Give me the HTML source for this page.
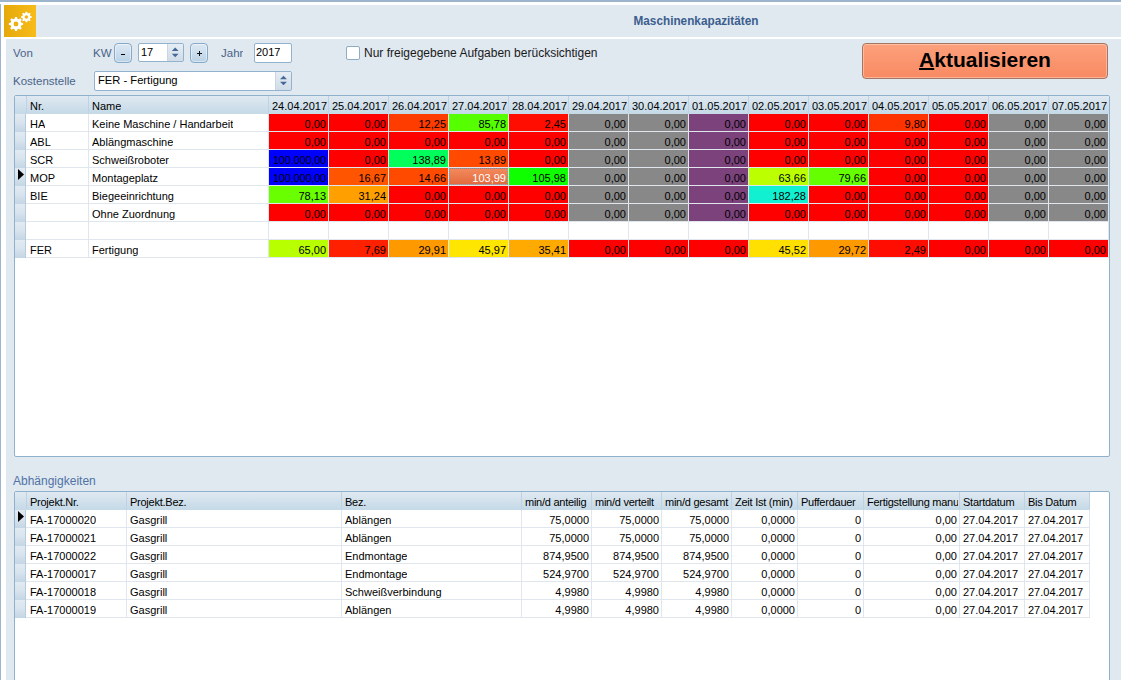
<!DOCTYPE html>
<html><head><meta charset="utf-8"><title>Maschinenkapazitäten</title>
<style>
html,body{margin:0;padding:0;}
body{width:1121px;height:680px;overflow:hidden;position:relative;background:#fff;font-family:"Liberation Sans",sans-serif;font-size:11px;color:#000;}
div,span{position:absolute;box-sizing:border-box;}
.t{white-space:nowrap;line-height:20px;overflow:hidden;}
.r{text-align:right;}
.hd{background:linear-gradient(#e0e9f1,#c4d9e7);}
.ind{background:linear-gradient(#e2eaf2 0%,#d9e4ee 45%,#c4d5e4 100%);}
.lbl{color:#4a6488;font-size:11.5px;white-space:nowrap;}
</style></head><body>

<div style="left:0px;top:0px;width:1121px;height:2px;background:#9cb4cc"></div>
<div style="left:0px;top:4px;width:1px;height:676px;background:#9cb4cc"></div>
<div style="left:4px;top:5px;width:32px;height:32px;background:linear-gradient(90deg,#e5a90b,#f7bb1a)"></div>
<svg style="position:absolute;left:0;top:0" width="40" height="40" viewBox="0 0 40 40"><path fill="#fff" fill-rule="evenodd" d="M21.34,22.67 L23.12,22.95 L23.12,25.05 L21.34,25.33 L20.71,26.84 L21.78,28.30 L20.30,29.78 L18.84,28.71 L17.33,29.34 L17.05,31.12 L14.95,31.12 L14.67,29.34 L13.16,28.71 L11.70,29.78 L10.22,28.30 L11.29,26.84 L10.66,25.33 L8.88,25.05 L8.88,22.95 L10.66,22.67 L11.29,21.16 L10.22,19.70 L11.70,18.22 L13.16,19.29 L14.67,18.66 L14.95,16.88 L17.05,16.88 L17.33,18.66 L18.84,19.29 L20.30,18.22 L21.78,19.70 L20.71,21.16Z M18.40,24.00 A2.4,2.4 0 1,0 13.60,24.00 A2.4,2.4 0 1,0 18.40,24.00Z M30.38,16.01 L31.74,16.21 L31.74,17.79 L30.38,17.99 L29.91,19.11 L30.73,20.22 L29.62,21.33 L28.51,20.51 L27.39,20.98 L27.19,22.34 L25.61,22.34 L25.41,20.98 L24.29,20.51 L23.18,21.33 L22.07,20.22 L22.89,19.11 L22.42,17.99 L21.06,17.79 L21.06,16.21 L22.42,16.01 L22.89,14.89 L22.07,13.78 L23.18,12.67 L24.29,13.49 L25.41,13.02 L25.61,11.66 L27.19,11.66 L27.39,13.02 L28.51,13.49 L29.62,12.67 L30.73,13.78 L29.91,14.89Z M28.20,17.00 A1.8,1.8 0 1,0 24.60,17.00 A1.8,1.8 0 1,0 28.20,17.00Z"/></svg>
<div style="left:36px;top:5px;width:1085px;height:32px;background:#e0e8f0"></div>
<div style="left:36px;top:5px;width:1085px;height:32px;"></div>
<div class="t" style="left:596px;top:11px;width:200px;height:24px;text-align:center;font-weight:bold;font-size:12.6px;transform:scaleX(0.935);color:#3b5e8e;">Maschinenkapazitäten</div>
<div style="left:6px;top:39px;width:1115px;height:641px;background:#e0e8f0"></div>
<div class="lbl t" style="left:13px;top:43px;">Von</div>
<div class="lbl t" style="left:93px;top:43px;">KW</div>
<div class="lbl t" style="left:221px;top:43px;">Jahr</div>
<div class="lbl t" style="left:13px;top:71px;">Kostenstelle</div>
<div style="left:114px;top:43px;width:18px;height:20px;border:1px solid #86a9c9;border-radius:4px;background:linear-gradient(#dde9f3,#bad2e6);box-shadow:inset 0 0 0 1px rgba(255,255,255,0.45);"><div style="left:6px;top:10px;width:4px;height:1px;background:#000"></div></div>
<div style="left:138px;top:43px;width:46px;height:19px;border:1px solid #92b2ce;border-radius:2px;background:#fff;"></div>
<div style="left:167px;top:44px;width:16px;height:17px;background:linear-gradient(#e6edf4,#d0dce8);border-left:1px solid #c8d6e4;"></div>
<svg style="position:absolute;left:167px;top:44px" width="16" height="17"><path d="M4.8,7 L8.2,3.6 L11.6,7Z M4.8,9.8 L8.2,13.2 L11.6,9.8Z" fill="#44689a"/></svg>
<div class="t" style="left:141px;top:42px;font-size:11px;line-height:20px;">17</div>
<div style="left:190px;top:43px;width:18px;height:20px;border:1px solid #86a9c9;border-radius:4px;background:linear-gradient(#dde9f3,#bad2e6);box-shadow:inset 0 0 0 1px rgba(255,255,255,0.45);"><div style="left:6px;top:9px;width:5px;height:1px;background:#111"></div><div style="left:8px;top:7px;width:1px;height:5px;background:#111"></div></div>
<div style="left:254px;top:43px;width:38px;height:20px;border:1px solid #92b2ce;border-radius:2px;background:#fff;"></div>
<div class="t" style="left:256px;top:42px;font-size:11px;">2017</div>
<div style="left:94px;top:71px;width:198px;height:20px;border:1px solid #92b2ce;border-radius:2px;background:#fff;"></div>
<div style="left:275px;top:72px;width:16px;height:18px;background:linear-gradient(#e6edf4,#d0dce8);border-left:1px solid #c8d6e4;"></div>
<svg style="position:absolute;left:275px;top:72px" width="16" height="18"><path d="M5,7.2 L8.5,3.8 L12,7.2Z M5,9.8 L8.5,13.2 L12,9.8Z" fill="#44689a"/></svg>
<div class="t" style="left:98px;top:70px;font-size:11.2px;">FER - Fertigung</div>
<div style="left:346px;top:46px;width:14px;height:14px;border:1px solid #8eacc8;border-radius:2px;background:#fff;"></div>
<div class="t" style="left:364px;top:43px;font-size:12px;color:#1a1a1a;">Nur freigegebene Aufgaben berücksichtigen</div>
<div style="left:862px;top:43px;width:246px;height:36px;border:1px solid #a27565;border-radius:4px;background:linear-gradient(#fca07c,#f88a62);box-shadow:inset 0 0 0 1px rgba(255,215,190,0.55);"></div>
<div class="t" style="left:862px;top:48px;width:246px;height:26px;line-height:24px;text-align:center;font-weight:bold;font-size:21px;"><u style="text-decoration-thickness:1.5px;text-underline-offset:1px">A</u>ktualisieren</div>
<div style="left:14px;top:95px;width:1096px;height:362px;border:1px solid #8fb1cc;background:#fff;border-radius:2px;"></div>
<div style="left:15px;top:96px;width:1094px;height:18px;"></div>
<div class="hd" style="left:15px;top:96px;width:1094px;height:18px;"></div>
<div style="left:26px;top:96px;width:1px;height:17px;background:#bfd2e3"></div>
<div style="left:88px;top:96px;width:1px;height:17px;background:#bfd2e3"></div>
<div style="left:268px;top:96px;width:1px;height:17px;background:#bfd2e3"></div>
<div style="left:328px;top:96px;width:1px;height:17px;background:#bfd2e3"></div>
<div style="left:388px;top:96px;width:1px;height:17px;background:#bfd2e3"></div>
<div style="left:448px;top:96px;width:1px;height:17px;background:#bfd2e3"></div>
<div style="left:508px;top:96px;width:1px;height:17px;background:#bfd2e3"></div>
<div style="left:568px;top:96px;width:1px;height:17px;background:#bfd2e3"></div>
<div style="left:628px;top:96px;width:1px;height:17px;background:#bfd2e3"></div>
<div style="left:688px;top:96px;width:1px;height:17px;background:#bfd2e3"></div>
<div style="left:748px;top:96px;width:1px;height:17px;background:#bfd2e3"></div>
<div style="left:808px;top:96px;width:1px;height:17px;background:#bfd2e3"></div>
<div style="left:868px;top:96px;width:1px;height:17px;background:#bfd2e3"></div>
<div style="left:928px;top:96px;width:1px;height:17px;background:#bfd2e3"></div>
<div style="left:988px;top:96px;width:1px;height:17px;background:#bfd2e3"></div>
<div style="left:1048px;top:96px;width:1px;height:17px;background:#bfd2e3"></div>
<div class="t" style="left:30px;top:96px;">Nr.</div>
<div class="t" style="left:92px;top:96px;">Name</div>
<div class="t" style="left:272px;top:96px;">24.04.2017</div>
<div class="t" style="left:332px;top:96px;">25.04.2017</div>
<div class="t" style="left:392px;top:96px;">26.04.2017</div>
<div class="t" style="left:452px;top:96px;">27.04.2017</div>
<div class="t" style="left:512px;top:96px;">28.04.2017</div>
<div class="t" style="left:572px;top:96px;">29.04.2017</div>
<div class="t" style="left:632px;top:96px;">30.04.2017</div>
<div class="t" style="left:692px;top:96px;">01.05.2017</div>
<div class="t" style="left:752px;top:96px;">02.05.2017</div>
<div class="t" style="left:812px;top:96px;">03.05.2017</div>
<div class="t" style="left:872px;top:96px;">04.05.2017</div>
<div class="t" style="left:932px;top:96px;">05.05.2017</div>
<div class="t" style="left:992px;top:96px;">06.05.2017</div>
<div class="t" style="left:1052px;top:96px;">07.05.2017</div>
<div class="ind" style="left:15px;top:114px;width:10px;height:18px;"></div>
<div style="left:25px;top:114px;width:1px;height:18px;background:#b4cce0"></div>
<div style="left:26px;top:131px;width:1083px;height:1px;background:#dfe6ee"></div>
<div style="left:88px;top:114px;width:1px;height:17px;background:#dfe6ee"></div>
<div style="left:268px;top:114px;width:1px;height:17px;background:#dfe6ee"></div>
<div style="left:328px;top:114px;width:1px;height:17px;background:#dfe6ee"></div>
<div style="left:388px;top:114px;width:1px;height:17px;background:#dfe6ee"></div>
<div style="left:448px;top:114px;width:1px;height:17px;background:#dfe6ee"></div>
<div style="left:508px;top:114px;width:1px;height:17px;background:#dfe6ee"></div>
<div style="left:568px;top:114px;width:1px;height:17px;background:#dfe6ee"></div>
<div style="left:628px;top:114px;width:1px;height:17px;background:#dfe6ee"></div>
<div style="left:688px;top:114px;width:1px;height:17px;background:#dfe6ee"></div>
<div style="left:748px;top:114px;width:1px;height:17px;background:#dfe6ee"></div>
<div style="left:808px;top:114px;width:1px;height:17px;background:#dfe6ee"></div>
<div style="left:868px;top:114px;width:1px;height:17px;background:#dfe6ee"></div>
<div style="left:928px;top:114px;width:1px;height:17px;background:#dfe6ee"></div>
<div style="left:988px;top:114px;width:1px;height:17px;background:#dfe6ee"></div>
<div style="left:1048px;top:114px;width:1px;height:17px;background:#dfe6ee"></div>
<div style="left:1108px;top:114px;width:1px;height:17px;background:#dfe6ee"></div>
<div class="t" style="left:30px;top:114px;">HA</div>
<div class="t" style="left:92px;top:114px;">Keine Maschine / Handarbeit</div>
<div class="t r" style="left:269px;top:114px;width:59px;height:17px;background:#ff0000;line-height:20px;padding-right:2px;">0,00</div>
<div class="t r" style="left:329px;top:114px;width:59px;height:17px;background:#ff0000;line-height:20px;padding-right:2px;">0,00</div>
<div class="t r" style="left:389px;top:114px;width:59px;height:17px;background:#ff3c00;line-height:20px;padding-right:2px;">12,25</div>
<div class="t r" style="left:449px;top:114px;width:59px;height:17px;background:#55ff00;line-height:20px;padding-right:2px;">85,78</div>
<div class="t r" style="left:509px;top:114px;width:59px;height:17px;background:#ff0d00;line-height:20px;padding-right:2px;">2,45</div>
<div class="t r" style="left:569px;top:114px;width:59px;height:17px;background:#888888;line-height:20px;padding-right:2px;">0,00</div>
<div class="t r" style="left:629px;top:114px;width:59px;height:17px;background:#888888;line-height:20px;padding-right:2px;">0,00</div>
<div class="t r" style="left:689px;top:114px;width:59px;height:17px;background:#7b427c;line-height:20px;padding-right:2px;">0,00</div>
<div class="t r" style="left:749px;top:114px;width:59px;height:17px;background:#ff0000;line-height:20px;padding-right:2px;">0,00</div>
<div class="t r" style="left:809px;top:114px;width:59px;height:17px;background:#ff0000;line-height:20px;padding-right:2px;">0,00</div>
<div class="t r" style="left:869px;top:114px;width:59px;height:17px;background:#ff3300;line-height:20px;padding-right:2px;">9,80</div>
<div class="t r" style="left:929px;top:114px;width:59px;height:17px;background:#ff0000;line-height:20px;padding-right:2px;">0,00</div>
<div class="t r" style="left:989px;top:114px;width:59px;height:17px;background:#888888;line-height:20px;padding-right:2px;">0,00</div>
<div class="t r" style="left:1049px;top:114px;width:59px;height:17px;background:#888888;line-height:20px;padding-right:2px;">0,00</div>
<div class="ind" style="left:15px;top:132px;width:10px;height:18px;"></div>
<div style="left:25px;top:132px;width:1px;height:18px;background:#b4cce0"></div>
<div style="left:26px;top:149px;width:1083px;height:1px;background:#dfe6ee"></div>
<div style="left:88px;top:132px;width:1px;height:17px;background:#dfe6ee"></div>
<div style="left:268px;top:132px;width:1px;height:17px;background:#dfe6ee"></div>
<div style="left:328px;top:132px;width:1px;height:17px;background:#dfe6ee"></div>
<div style="left:388px;top:132px;width:1px;height:17px;background:#dfe6ee"></div>
<div style="left:448px;top:132px;width:1px;height:17px;background:#dfe6ee"></div>
<div style="left:508px;top:132px;width:1px;height:17px;background:#dfe6ee"></div>
<div style="left:568px;top:132px;width:1px;height:17px;background:#dfe6ee"></div>
<div style="left:628px;top:132px;width:1px;height:17px;background:#dfe6ee"></div>
<div style="left:688px;top:132px;width:1px;height:17px;background:#dfe6ee"></div>
<div style="left:748px;top:132px;width:1px;height:17px;background:#dfe6ee"></div>
<div style="left:808px;top:132px;width:1px;height:17px;background:#dfe6ee"></div>
<div style="left:868px;top:132px;width:1px;height:17px;background:#dfe6ee"></div>
<div style="left:928px;top:132px;width:1px;height:17px;background:#dfe6ee"></div>
<div style="left:988px;top:132px;width:1px;height:17px;background:#dfe6ee"></div>
<div style="left:1048px;top:132px;width:1px;height:17px;background:#dfe6ee"></div>
<div style="left:1108px;top:132px;width:1px;height:17px;background:#dfe6ee"></div>
<div class="t" style="left:30px;top:132px;">ABL</div>
<div class="t" style="left:92px;top:132px;">Ablängmaschine</div>
<div class="t r" style="left:269px;top:132px;width:59px;height:17px;background:#ff0000;line-height:20px;padding-right:2px;">0,00</div>
<div class="t r" style="left:329px;top:132px;width:59px;height:17px;background:#ff0000;line-height:20px;padding-right:2px;">0,00</div>
<div class="t r" style="left:389px;top:132px;width:59px;height:17px;background:#ff0000;line-height:20px;padding-right:2px;">0,00</div>
<div class="t r" style="left:449px;top:132px;width:59px;height:17px;background:#ff0000;line-height:20px;padding-right:2px;">0,00</div>
<div class="t r" style="left:509px;top:132px;width:59px;height:17px;background:#ff0000;line-height:20px;padding-right:2px;">0,00</div>
<div class="t r" style="left:569px;top:132px;width:59px;height:17px;background:#888888;line-height:20px;padding-right:2px;">0,00</div>
<div class="t r" style="left:629px;top:132px;width:59px;height:17px;background:#888888;line-height:20px;padding-right:2px;">0,00</div>
<div class="t r" style="left:689px;top:132px;width:59px;height:17px;background:#7b427c;line-height:20px;padding-right:2px;">0,00</div>
<div class="t r" style="left:749px;top:132px;width:59px;height:17px;background:#ff0000;line-height:20px;padding-right:2px;">0,00</div>
<div class="t r" style="left:809px;top:132px;width:59px;height:17px;background:#ff0000;line-height:20px;padding-right:2px;">0,00</div>
<div class="t r" style="left:869px;top:132px;width:59px;height:17px;background:#ff0000;line-height:20px;padding-right:2px;">0,00</div>
<div class="t r" style="left:929px;top:132px;width:59px;height:17px;background:#ff0000;line-height:20px;padding-right:2px;">0,00</div>
<div class="t r" style="left:989px;top:132px;width:59px;height:17px;background:#888888;line-height:20px;padding-right:2px;">0,00</div>
<div class="t r" style="left:1049px;top:132px;width:59px;height:17px;background:#888888;line-height:20px;padding-right:2px;">0,00</div>
<div class="ind" style="left:15px;top:150px;width:10px;height:18px;"></div>
<div style="left:25px;top:150px;width:1px;height:18px;background:#b4cce0"></div>
<div style="left:26px;top:167px;width:1083px;height:1px;background:#dfe6ee"></div>
<div style="left:88px;top:150px;width:1px;height:17px;background:#dfe6ee"></div>
<div style="left:268px;top:150px;width:1px;height:17px;background:#dfe6ee"></div>
<div style="left:328px;top:150px;width:1px;height:17px;background:#dfe6ee"></div>
<div style="left:388px;top:150px;width:1px;height:17px;background:#dfe6ee"></div>
<div style="left:448px;top:150px;width:1px;height:17px;background:#dfe6ee"></div>
<div style="left:508px;top:150px;width:1px;height:17px;background:#dfe6ee"></div>
<div style="left:568px;top:150px;width:1px;height:17px;background:#dfe6ee"></div>
<div style="left:628px;top:150px;width:1px;height:17px;background:#dfe6ee"></div>
<div style="left:688px;top:150px;width:1px;height:17px;background:#dfe6ee"></div>
<div style="left:748px;top:150px;width:1px;height:17px;background:#dfe6ee"></div>
<div style="left:808px;top:150px;width:1px;height:17px;background:#dfe6ee"></div>
<div style="left:868px;top:150px;width:1px;height:17px;background:#dfe6ee"></div>
<div style="left:928px;top:150px;width:1px;height:17px;background:#dfe6ee"></div>
<div style="left:988px;top:150px;width:1px;height:17px;background:#dfe6ee"></div>
<div style="left:1048px;top:150px;width:1px;height:17px;background:#dfe6ee"></div>
<div style="left:1108px;top:150px;width:1px;height:17px;background:#dfe6ee"></div>
<div class="t" style="left:30px;top:150px;">SCR</div>
<div class="t" style="left:92px;top:150px;">Schweißroboter</div>
<div class="t r" style="left:269px;top:150px;width:59px;height:17px;background:#0000ff;line-height:20px;padding-right:2px;letter-spacing:-0.2px;">100.000,00</div>
<div class="t r" style="left:329px;top:150px;width:59px;height:17px;background:#ff0000;line-height:20px;padding-right:2px;">0,00</div>
<div class="t r" style="left:389px;top:150px;width:59px;height:17px;background:#00ff5a;line-height:20px;padding-right:2px;">138,89</div>
<div class="t r" style="left:449px;top:150px;width:59px;height:17px;background:#ff4a00;line-height:20px;padding-right:2px;">13,89</div>
<div class="t r" style="left:509px;top:150px;width:59px;height:17px;background:#ff0000;line-height:20px;padding-right:2px;">0,00</div>
<div class="t r" style="left:569px;top:150px;width:59px;height:17px;background:#888888;line-height:20px;padding-right:2px;">0,00</div>
<div class="t r" style="left:629px;top:150px;width:59px;height:17px;background:#888888;line-height:20px;padding-right:2px;">0,00</div>
<div class="t r" style="left:689px;top:150px;width:59px;height:17px;background:#7b427c;line-height:20px;padding-right:2px;">0,00</div>
<div class="t r" style="left:749px;top:150px;width:59px;height:17px;background:#ff0000;line-height:20px;padding-right:2px;">0,00</div>
<div class="t r" style="left:809px;top:150px;width:59px;height:17px;background:#ff0000;line-height:20px;padding-right:2px;">0,00</div>
<div class="t r" style="left:869px;top:150px;width:59px;height:17px;background:#ff0000;line-height:20px;padding-right:2px;">0,00</div>
<div class="t r" style="left:929px;top:150px;width:59px;height:17px;background:#ff0000;line-height:20px;padding-right:2px;">0,00</div>
<div class="t r" style="left:989px;top:150px;width:59px;height:17px;background:#888888;line-height:20px;padding-right:2px;">0,00</div>
<div class="t r" style="left:1049px;top:150px;width:59px;height:17px;background:#888888;line-height:20px;padding-right:2px;">0,00</div>
<div class="ind" style="left:15px;top:168px;width:10px;height:18px;"></div>
<div style="left:25px;top:168px;width:1px;height:18px;background:#b4cce0"></div>
<div style="left:26px;top:185px;width:1083px;height:1px;background:#dfe6ee"></div>
<div style="left:88px;top:168px;width:1px;height:17px;background:#dfe6ee"></div>
<div style="left:268px;top:168px;width:1px;height:17px;background:#dfe6ee"></div>
<div style="left:328px;top:168px;width:1px;height:17px;background:#dfe6ee"></div>
<div style="left:388px;top:168px;width:1px;height:17px;background:#dfe6ee"></div>
<div style="left:448px;top:168px;width:1px;height:17px;background:#dfe6ee"></div>
<div style="left:508px;top:168px;width:1px;height:17px;background:#dfe6ee"></div>
<div style="left:568px;top:168px;width:1px;height:17px;background:#dfe6ee"></div>
<div style="left:628px;top:168px;width:1px;height:17px;background:#dfe6ee"></div>
<div style="left:688px;top:168px;width:1px;height:17px;background:#dfe6ee"></div>
<div style="left:748px;top:168px;width:1px;height:17px;background:#dfe6ee"></div>
<div style="left:808px;top:168px;width:1px;height:17px;background:#dfe6ee"></div>
<div style="left:868px;top:168px;width:1px;height:17px;background:#dfe6ee"></div>
<div style="left:928px;top:168px;width:1px;height:17px;background:#dfe6ee"></div>
<div style="left:988px;top:168px;width:1px;height:17px;background:#dfe6ee"></div>
<div style="left:1048px;top:168px;width:1px;height:17px;background:#dfe6ee"></div>
<div style="left:1108px;top:168px;width:1px;height:17px;background:#dfe6ee"></div>
<div class="t" style="left:30px;top:168px;">MOP</div>
<div class="t" style="left:92px;top:168px;">Montageplatz</div>
<div class="t r" style="left:269px;top:168px;width:59px;height:17px;background:#0000ff;line-height:20px;padding-right:2px;letter-spacing:-0.2px;">100.000,00</div>
<div class="t r" style="left:329px;top:168px;width:59px;height:17px;background:#ff5500;line-height:20px;padding-right:2px;">16,67</div>
<div class="t r" style="left:389px;top:168px;width:59px;height:17px;background:#ff4a00;line-height:20px;padding-right:2px;">14,66</div>
<div style="left:449px;top:168px;width:59px;height:17px;border:1px dotted #5fa8d8;background:linear-gradient(#f3895c,#e26b3e);"></div>
<div class="t r" style="left:449px;top:168px;width:57px;height:18px;color:#fff;">103,99</div>
<div class="t r" style="left:509px;top:168px;width:59px;height:17px;background:#10ff00;line-height:20px;padding-right:2px;">105,98</div>
<div class="t r" style="left:569px;top:168px;width:59px;height:17px;background:#888888;line-height:20px;padding-right:2px;">0,00</div>
<div class="t r" style="left:629px;top:168px;width:59px;height:17px;background:#888888;line-height:20px;padding-right:2px;">0,00</div>
<div class="t r" style="left:689px;top:168px;width:59px;height:17px;background:#7b427c;line-height:20px;padding-right:2px;">0,00</div>
<div class="t r" style="left:749px;top:168px;width:59px;height:17px;background:#bbff00;line-height:20px;padding-right:2px;">63,66</div>
<div class="t r" style="left:809px;top:168px;width:59px;height:17px;background:#66ff00;line-height:20px;padding-right:2px;">79,66</div>
<div class="t r" style="left:869px;top:168px;width:59px;height:17px;background:#ff0000;line-height:20px;padding-right:2px;">0,00</div>
<div class="t r" style="left:929px;top:168px;width:59px;height:17px;background:#ff0000;line-height:20px;padding-right:2px;">0,00</div>
<div class="t r" style="left:989px;top:168px;width:59px;height:17px;background:#888888;line-height:20px;padding-right:2px;">0,00</div>
<div class="t r" style="left:1049px;top:168px;width:59px;height:17px;background:#888888;line-height:20px;padding-right:2px;">0,00</div>
<svg style="position:absolute;left:17px;top:168px" width="8" height="13"><path d="M1,1 L7,6.5 L1,12Z" fill="#000"/></svg>
<div class="ind" style="left:15px;top:186px;width:10px;height:18px;"></div>
<div style="left:25px;top:186px;width:1px;height:18px;background:#b4cce0"></div>
<div style="left:26px;top:203px;width:1083px;height:1px;background:#dfe6ee"></div>
<div style="left:88px;top:186px;width:1px;height:17px;background:#dfe6ee"></div>
<div style="left:268px;top:186px;width:1px;height:17px;background:#dfe6ee"></div>
<div style="left:328px;top:186px;width:1px;height:17px;background:#dfe6ee"></div>
<div style="left:388px;top:186px;width:1px;height:17px;background:#dfe6ee"></div>
<div style="left:448px;top:186px;width:1px;height:17px;background:#dfe6ee"></div>
<div style="left:508px;top:186px;width:1px;height:17px;background:#dfe6ee"></div>
<div style="left:568px;top:186px;width:1px;height:17px;background:#dfe6ee"></div>
<div style="left:628px;top:186px;width:1px;height:17px;background:#dfe6ee"></div>
<div style="left:688px;top:186px;width:1px;height:17px;background:#dfe6ee"></div>
<div style="left:748px;top:186px;width:1px;height:17px;background:#dfe6ee"></div>
<div style="left:808px;top:186px;width:1px;height:17px;background:#dfe6ee"></div>
<div style="left:868px;top:186px;width:1px;height:17px;background:#dfe6ee"></div>
<div style="left:928px;top:186px;width:1px;height:17px;background:#dfe6ee"></div>
<div style="left:988px;top:186px;width:1px;height:17px;background:#dfe6ee"></div>
<div style="left:1048px;top:186px;width:1px;height:17px;background:#dfe6ee"></div>
<div style="left:1108px;top:186px;width:1px;height:17px;background:#dfe6ee"></div>
<div class="t" style="left:30px;top:186px;">BIE</div>
<div class="t" style="left:92px;top:186px;">Biegeeinrichtung</div>
<div class="t r" style="left:269px;top:186px;width:59px;height:17px;background:#6aff00;line-height:20px;padding-right:2px;">78,13</div>
<div class="t r" style="left:329px;top:186px;width:59px;height:17px;background:#ff9f00;line-height:20px;padding-right:2px;">31,24</div>
<div class="t r" style="left:389px;top:186px;width:59px;height:17px;background:#ff0000;line-height:20px;padding-right:2px;">0,00</div>
<div class="t r" style="left:449px;top:186px;width:59px;height:17px;background:#ff0000;line-height:20px;padding-right:2px;">0,00</div>
<div class="t r" style="left:509px;top:186px;width:59px;height:17px;background:#ff0000;line-height:20px;padding-right:2px;">0,00</div>
<div class="t r" style="left:569px;top:186px;width:59px;height:17px;background:#888888;line-height:20px;padding-right:2px;">0,00</div>
<div class="t r" style="left:629px;top:186px;width:59px;height:17px;background:#888888;line-height:20px;padding-right:2px;">0,00</div>
<div class="t r" style="left:689px;top:186px;width:59px;height:17px;background:#7b427c;line-height:20px;padding-right:2px;">0,00</div>
<div class="t r" style="left:749px;top:186px;width:59px;height:17px;background:#11f0d0;line-height:20px;padding-right:2px;">182,28</div>
<div class="t r" style="left:809px;top:186px;width:59px;height:17px;background:#ff0000;line-height:20px;padding-right:2px;">0,00</div>
<div class="t r" style="left:869px;top:186px;width:59px;height:17px;background:#ff0000;line-height:20px;padding-right:2px;">0,00</div>
<div class="t r" style="left:929px;top:186px;width:59px;height:17px;background:#ff0000;line-height:20px;padding-right:2px;">0,00</div>
<div class="t r" style="left:989px;top:186px;width:59px;height:17px;background:#888888;line-height:20px;padding-right:2px;">0,00</div>
<div class="t r" style="left:1049px;top:186px;width:59px;height:17px;background:#888888;line-height:20px;padding-right:2px;">0,00</div>
<div class="ind" style="left:15px;top:204px;width:10px;height:18px;"></div>
<div style="left:25px;top:204px;width:1px;height:18px;background:#b4cce0"></div>
<div style="left:26px;top:221px;width:1083px;height:1px;background:#dfe6ee"></div>
<div style="left:88px;top:204px;width:1px;height:17px;background:#dfe6ee"></div>
<div style="left:268px;top:204px;width:1px;height:17px;background:#dfe6ee"></div>
<div style="left:328px;top:204px;width:1px;height:17px;background:#dfe6ee"></div>
<div style="left:388px;top:204px;width:1px;height:17px;background:#dfe6ee"></div>
<div style="left:448px;top:204px;width:1px;height:17px;background:#dfe6ee"></div>
<div style="left:508px;top:204px;width:1px;height:17px;background:#dfe6ee"></div>
<div style="left:568px;top:204px;width:1px;height:17px;background:#dfe6ee"></div>
<div style="left:628px;top:204px;width:1px;height:17px;background:#dfe6ee"></div>
<div style="left:688px;top:204px;width:1px;height:17px;background:#dfe6ee"></div>
<div style="left:748px;top:204px;width:1px;height:17px;background:#dfe6ee"></div>
<div style="left:808px;top:204px;width:1px;height:17px;background:#dfe6ee"></div>
<div style="left:868px;top:204px;width:1px;height:17px;background:#dfe6ee"></div>
<div style="left:928px;top:204px;width:1px;height:17px;background:#dfe6ee"></div>
<div style="left:988px;top:204px;width:1px;height:17px;background:#dfe6ee"></div>
<div style="left:1048px;top:204px;width:1px;height:17px;background:#dfe6ee"></div>
<div style="left:1108px;top:204px;width:1px;height:17px;background:#dfe6ee"></div>
<div class="t" style="left:30px;top:204px;"></div>
<div class="t" style="left:92px;top:204px;">Ohne Zuordnung</div>
<div class="t r" style="left:269px;top:204px;width:59px;height:17px;background:#ff0000;line-height:20px;padding-right:2px;">0,00</div>
<div class="t r" style="left:329px;top:204px;width:59px;height:17px;background:#ff0000;line-height:20px;padding-right:2px;">0,00</div>
<div class="t r" style="left:389px;top:204px;width:59px;height:17px;background:#ff0000;line-height:20px;padding-right:2px;">0,00</div>
<div class="t r" style="left:449px;top:204px;width:59px;height:17px;background:#ff0000;line-height:20px;padding-right:2px;">0,00</div>
<div class="t r" style="left:509px;top:204px;width:59px;height:17px;background:#ff0000;line-height:20px;padding-right:2px;">0,00</div>
<div class="t r" style="left:569px;top:204px;width:59px;height:17px;background:#888888;line-height:20px;padding-right:2px;">0,00</div>
<div class="t r" style="left:629px;top:204px;width:59px;height:17px;background:#888888;line-height:20px;padding-right:2px;">0,00</div>
<div class="t r" style="left:689px;top:204px;width:59px;height:17px;background:#7b427c;line-height:20px;padding-right:2px;">0,00</div>
<div class="t r" style="left:749px;top:204px;width:59px;height:17px;background:#ff0000;line-height:20px;padding-right:2px;">0,00</div>
<div class="t r" style="left:809px;top:204px;width:59px;height:17px;background:#ff0000;line-height:20px;padding-right:2px;">0,00</div>
<div class="t r" style="left:869px;top:204px;width:59px;height:17px;background:#ff0000;line-height:20px;padding-right:2px;">0,00</div>
<div class="t r" style="left:929px;top:204px;width:59px;height:17px;background:#ff0000;line-height:20px;padding-right:2px;">0,00</div>
<div class="t r" style="left:989px;top:204px;width:59px;height:17px;background:#888888;line-height:20px;padding-right:2px;">0,00</div>
<div class="t r" style="left:1049px;top:204px;width:59px;height:17px;background:#888888;line-height:20px;padding-right:2px;">0,00</div>
<div class="ind" style="left:15px;top:222px;width:10px;height:18px;"></div>
<div style="left:25px;top:222px;width:1px;height:18px;background:#b4cce0"></div>
<div style="left:26px;top:239px;width:1083px;height:1px;background:#dfe6ee"></div>
<div style="left:88px;top:222px;width:1px;height:17px;background:#dfe6ee"></div>
<div style="left:268px;top:222px;width:1px;height:17px;background:#dfe6ee"></div>
<div style="left:328px;top:222px;width:1px;height:17px;background:#dfe6ee"></div>
<div style="left:388px;top:222px;width:1px;height:17px;background:#dfe6ee"></div>
<div style="left:448px;top:222px;width:1px;height:17px;background:#dfe6ee"></div>
<div style="left:508px;top:222px;width:1px;height:17px;background:#dfe6ee"></div>
<div style="left:568px;top:222px;width:1px;height:17px;background:#dfe6ee"></div>
<div style="left:628px;top:222px;width:1px;height:17px;background:#dfe6ee"></div>
<div style="left:688px;top:222px;width:1px;height:17px;background:#dfe6ee"></div>
<div style="left:748px;top:222px;width:1px;height:17px;background:#dfe6ee"></div>
<div style="left:808px;top:222px;width:1px;height:17px;background:#dfe6ee"></div>
<div style="left:868px;top:222px;width:1px;height:17px;background:#dfe6ee"></div>
<div style="left:928px;top:222px;width:1px;height:17px;background:#dfe6ee"></div>
<div style="left:988px;top:222px;width:1px;height:17px;background:#dfe6ee"></div>
<div style="left:1048px;top:222px;width:1px;height:17px;background:#dfe6ee"></div>
<div style="left:1108px;top:222px;width:1px;height:17px;background:#dfe6ee"></div>
<div class="ind" style="left:15px;top:240px;width:10px;height:18px;"></div>
<div style="left:25px;top:240px;width:1px;height:18px;background:#b4cce0"></div>
<div style="left:26px;top:257px;width:1083px;height:1px;background:#dfe6ee"></div>
<div style="left:88px;top:240px;width:1px;height:17px;background:#dfe6ee"></div>
<div style="left:268px;top:240px;width:1px;height:17px;background:#dfe6ee"></div>
<div style="left:328px;top:240px;width:1px;height:17px;background:#dfe6ee"></div>
<div style="left:388px;top:240px;width:1px;height:17px;background:#dfe6ee"></div>
<div style="left:448px;top:240px;width:1px;height:17px;background:#dfe6ee"></div>
<div style="left:508px;top:240px;width:1px;height:17px;background:#dfe6ee"></div>
<div style="left:568px;top:240px;width:1px;height:17px;background:#dfe6ee"></div>
<div style="left:628px;top:240px;width:1px;height:17px;background:#dfe6ee"></div>
<div style="left:688px;top:240px;width:1px;height:17px;background:#dfe6ee"></div>
<div style="left:748px;top:240px;width:1px;height:17px;background:#dfe6ee"></div>
<div style="left:808px;top:240px;width:1px;height:17px;background:#dfe6ee"></div>
<div style="left:868px;top:240px;width:1px;height:17px;background:#dfe6ee"></div>
<div style="left:928px;top:240px;width:1px;height:17px;background:#dfe6ee"></div>
<div style="left:988px;top:240px;width:1px;height:17px;background:#dfe6ee"></div>
<div style="left:1048px;top:240px;width:1px;height:17px;background:#dfe6ee"></div>
<div style="left:1108px;top:240px;width:1px;height:17px;background:#dfe6ee"></div>
<div class="t" style="left:30px;top:240px;">FER</div>
<div class="t" style="left:92px;top:240px;">Fertigung</div>
<div class="t r" style="left:269px;top:240px;width:59px;height:17px;background:#b8ff00;line-height:20px;padding-right:2px;">65,00</div>
<div class="t r" style="left:329px;top:240px;width:59px;height:17px;background:#ff2000;line-height:20px;padding-right:2px;">7,69</div>
<div class="t r" style="left:389px;top:240px;width:59px;height:17px;background:#ff9900;line-height:20px;padding-right:2px;">29,91</div>
<div class="t r" style="left:449px;top:240px;width:59px;height:17px;background:#ffe600;line-height:20px;padding-right:2px;">45,97</div>
<div class="t r" style="left:509px;top:240px;width:59px;height:17px;background:#ffaa00;line-height:20px;padding-right:2px;">35,41</div>
<div class="t r" style="left:569px;top:240px;width:59px;height:17px;background:#ff0000;line-height:20px;padding-right:2px;">0,00</div>
<div class="t r" style="left:629px;top:240px;width:59px;height:17px;background:#ff0000;line-height:20px;padding-right:2px;">0,00</div>
<div class="t r" style="left:689px;top:240px;width:59px;height:17px;background:#ff0000;line-height:20px;padding-right:2px;">0,00</div>
<div class="t r" style="left:749px;top:240px;width:59px;height:17px;background:#ffe000;line-height:20px;padding-right:2px;">45,52</div>
<div class="t r" style="left:809px;top:240px;width:59px;height:17px;background:#ff9900;line-height:20px;padding-right:2px;">29,72</div>
<div class="t r" style="left:869px;top:240px;width:59px;height:17px;background:#ff0d00;line-height:20px;padding-right:2px;">2,49</div>
<div class="t r" style="left:929px;top:240px;width:59px;height:17px;background:#ff0000;line-height:20px;padding-right:2px;">0,00</div>
<div class="t r" style="left:989px;top:240px;width:59px;height:17px;background:#ff0000;line-height:20px;padding-right:2px;">0,00</div>
<div class="t r" style="left:1049px;top:240px;width:59px;height:17px;background:#ff0000;line-height:20px;padding-right:2px;">0,00</div>
<div class="t" style="left:13px;top:471px;color:#4f72a6;font-size:12px;">Abhängigkeiten</div>
<div style="left:14px;top:491px;width:1096px;height:200px;border:1px solid #8fb1cc;background:#fff;border-radius:2px;"></div>
<div class="hd" style="left:15px;top:492px;width:1075px;height:18px;"></div>
<div style="left:26px;top:492px;width:1px;height:17px;background:#bfd2e3"></div>
<div style="left:126px;top:492px;width:1px;height:17px;background:#bfd2e3"></div>
<div style="left:341px;top:492px;width:1px;height:17px;background:#bfd2e3"></div>
<div style="left:521px;top:492px;width:1px;height:17px;background:#bfd2e3"></div>
<div style="left:591px;top:492px;width:1px;height:17px;background:#bfd2e3"></div>
<div style="left:661px;top:492px;width:1px;height:17px;background:#bfd2e3"></div>
<div style="left:731px;top:492px;width:1px;height:17px;background:#bfd2e3"></div>
<div style="left:797px;top:492px;width:1px;height:17px;background:#bfd2e3"></div>
<div style="left:863px;top:492px;width:1px;height:17px;background:#bfd2e3"></div>
<div style="left:959px;top:492px;width:1px;height:17px;background:#bfd2e3"></div>
<div style="left:1024px;top:492px;width:1px;height:17px;background:#bfd2e3"></div>
<div style="left:1089px;top:492px;width:1px;height:17px;background:#bfd2e3"></div>
<div class="t" style="left:30px;top:492px;width:95px;letter-spacing:-0.25px;">Projekt.Nr.</div>
<div class="t" style="left:130px;top:492px;width:210px;letter-spacing:-0.25px;">Projekt.Bez.</div>
<div class="t" style="left:345px;top:492px;width:175px;letter-spacing:-0.25px;">Bez.</div>
<div class="t" style="left:525px;top:492px;width:65px;letter-spacing:-0.25px;">min/d anteilig</div>
<div class="t" style="left:595px;top:492px;width:65px;letter-spacing:-0.25px;">min/d verteilt</div>
<div class="t" style="left:665px;top:492px;width:65px;letter-spacing:-0.25px;">min/d gesamt</div>
<div class="t" style="left:735px;top:492px;width:61px;letter-spacing:-0.25px;">Zeit Ist (min)</div>
<div class="t" style="left:801px;top:492px;width:61px;letter-spacing:-0.25px;">Pufferdauer</div>
<div class="t" style="left:867px;top:492px;width:91px;letter-spacing:-0.25px;">Fertigstellung manuell</div>
<div class="t" style="left:963px;top:492px;width:60px;letter-spacing:-0.25px;">Startdatum</div>
<div class="t" style="left:1028px;top:492px;width:60px;letter-spacing:-0.25px;">Bis Datum</div>
<div class="ind" style="left:15px;top:510px;width:10px;height:18px;"></div>
<div style="left:26px;top:527px;width:1064px;height:1px;background:#dfe6ee"></div>
<div style="left:25px;top:510px;width:1px;height:18px;background:#b4cce0"></div>
<div style="left:126px;top:510px;width:1px;height:17px;background:#dfe6ee"></div>
<div style="left:341px;top:510px;width:1px;height:17px;background:#dfe6ee"></div>
<div style="left:521px;top:510px;width:1px;height:17px;background:#dfe6ee"></div>
<div style="left:591px;top:510px;width:1px;height:17px;background:#dfe6ee"></div>
<div style="left:661px;top:510px;width:1px;height:17px;background:#dfe6ee"></div>
<div style="left:731px;top:510px;width:1px;height:17px;background:#dfe6ee"></div>
<div style="left:797px;top:510px;width:1px;height:17px;background:#dfe6ee"></div>
<div style="left:863px;top:510px;width:1px;height:17px;background:#dfe6ee"></div>
<div style="left:959px;top:510px;width:1px;height:17px;background:#dfe6ee"></div>
<div style="left:1024px;top:510px;width:1px;height:17px;background:#dfe6ee"></div>
<div style="left:1089px;top:510px;width:1px;height:17px;background:#dfe6ee"></div>
<div class="t" style="left:30px;top:510px;">FA-17000020</div>
<div class="t" style="left:130px;top:510px;">Gasgrill</div>
<div class="t" style="left:345px;top:510px;">Ablängen</div>
<div class="t r" style="left:522px;top:510px;width:67px;">75,0000</div>
<div class="t r" style="left:592px;top:510px;width:67px;">75,0000</div>
<div class="t r" style="left:662px;top:510px;width:67px;">75,0000</div>
<div class="t r" style="left:732px;top:510px;width:63px;">0,0000</div>
<div class="t r" style="left:798px;top:510px;width:63px;">0</div>
<div class="t r" style="left:864px;top:510px;width:93px;">0,00</div>
<div class="t" style="left:963px;top:510px;">27.04.2017</div>
<div class="t" style="left:1028px;top:510px;">27.04.2017</div>
<svg style="position:absolute;left:17px;top:510px" width="8" height="13"><path d="M1,1 L7,6.5 L1,12Z" fill="#000"/></svg>
<div class="ind" style="left:15px;top:528px;width:10px;height:18px;"></div>
<div style="left:26px;top:545px;width:1064px;height:1px;background:#dfe6ee"></div>
<div style="left:25px;top:528px;width:1px;height:18px;background:#b4cce0"></div>
<div style="left:126px;top:528px;width:1px;height:17px;background:#dfe6ee"></div>
<div style="left:341px;top:528px;width:1px;height:17px;background:#dfe6ee"></div>
<div style="left:521px;top:528px;width:1px;height:17px;background:#dfe6ee"></div>
<div style="left:591px;top:528px;width:1px;height:17px;background:#dfe6ee"></div>
<div style="left:661px;top:528px;width:1px;height:17px;background:#dfe6ee"></div>
<div style="left:731px;top:528px;width:1px;height:17px;background:#dfe6ee"></div>
<div style="left:797px;top:528px;width:1px;height:17px;background:#dfe6ee"></div>
<div style="left:863px;top:528px;width:1px;height:17px;background:#dfe6ee"></div>
<div style="left:959px;top:528px;width:1px;height:17px;background:#dfe6ee"></div>
<div style="left:1024px;top:528px;width:1px;height:17px;background:#dfe6ee"></div>
<div style="left:1089px;top:528px;width:1px;height:17px;background:#dfe6ee"></div>
<div class="t" style="left:30px;top:528px;">FA-17000021</div>
<div class="t" style="left:130px;top:528px;">Gasgrill</div>
<div class="t" style="left:345px;top:528px;">Ablängen</div>
<div class="t r" style="left:522px;top:528px;width:67px;">75,0000</div>
<div class="t r" style="left:592px;top:528px;width:67px;">75,0000</div>
<div class="t r" style="left:662px;top:528px;width:67px;">75,0000</div>
<div class="t r" style="left:732px;top:528px;width:63px;">0,0000</div>
<div class="t r" style="left:798px;top:528px;width:63px;">0</div>
<div class="t r" style="left:864px;top:528px;width:93px;">0,00</div>
<div class="t" style="left:963px;top:528px;">27.04.2017</div>
<div class="t" style="left:1028px;top:528px;">27.04.2017</div>
<div class="ind" style="left:15px;top:546px;width:10px;height:18px;"></div>
<div style="left:26px;top:563px;width:1064px;height:1px;background:#dfe6ee"></div>
<div style="left:25px;top:546px;width:1px;height:18px;background:#b4cce0"></div>
<div style="left:126px;top:546px;width:1px;height:17px;background:#dfe6ee"></div>
<div style="left:341px;top:546px;width:1px;height:17px;background:#dfe6ee"></div>
<div style="left:521px;top:546px;width:1px;height:17px;background:#dfe6ee"></div>
<div style="left:591px;top:546px;width:1px;height:17px;background:#dfe6ee"></div>
<div style="left:661px;top:546px;width:1px;height:17px;background:#dfe6ee"></div>
<div style="left:731px;top:546px;width:1px;height:17px;background:#dfe6ee"></div>
<div style="left:797px;top:546px;width:1px;height:17px;background:#dfe6ee"></div>
<div style="left:863px;top:546px;width:1px;height:17px;background:#dfe6ee"></div>
<div style="left:959px;top:546px;width:1px;height:17px;background:#dfe6ee"></div>
<div style="left:1024px;top:546px;width:1px;height:17px;background:#dfe6ee"></div>
<div style="left:1089px;top:546px;width:1px;height:17px;background:#dfe6ee"></div>
<div class="t" style="left:30px;top:546px;">FA-17000022</div>
<div class="t" style="left:130px;top:546px;">Gasgrill</div>
<div class="t" style="left:345px;top:546px;">Endmontage</div>
<div class="t r" style="left:522px;top:546px;width:67px;">874,9500</div>
<div class="t r" style="left:592px;top:546px;width:67px;">874,9500</div>
<div class="t r" style="left:662px;top:546px;width:67px;">874,9500</div>
<div class="t r" style="left:732px;top:546px;width:63px;">0,0000</div>
<div class="t r" style="left:798px;top:546px;width:63px;">0</div>
<div class="t r" style="left:864px;top:546px;width:93px;">0,00</div>
<div class="t" style="left:963px;top:546px;">27.04.2017</div>
<div class="t" style="left:1028px;top:546px;">27.04.2017</div>
<div class="ind" style="left:15px;top:564px;width:10px;height:18px;"></div>
<div style="left:26px;top:581px;width:1064px;height:1px;background:#dfe6ee"></div>
<div style="left:25px;top:564px;width:1px;height:18px;background:#b4cce0"></div>
<div style="left:126px;top:564px;width:1px;height:17px;background:#dfe6ee"></div>
<div style="left:341px;top:564px;width:1px;height:17px;background:#dfe6ee"></div>
<div style="left:521px;top:564px;width:1px;height:17px;background:#dfe6ee"></div>
<div style="left:591px;top:564px;width:1px;height:17px;background:#dfe6ee"></div>
<div style="left:661px;top:564px;width:1px;height:17px;background:#dfe6ee"></div>
<div style="left:731px;top:564px;width:1px;height:17px;background:#dfe6ee"></div>
<div style="left:797px;top:564px;width:1px;height:17px;background:#dfe6ee"></div>
<div style="left:863px;top:564px;width:1px;height:17px;background:#dfe6ee"></div>
<div style="left:959px;top:564px;width:1px;height:17px;background:#dfe6ee"></div>
<div style="left:1024px;top:564px;width:1px;height:17px;background:#dfe6ee"></div>
<div style="left:1089px;top:564px;width:1px;height:17px;background:#dfe6ee"></div>
<div class="t" style="left:30px;top:564px;">FA-17000017</div>
<div class="t" style="left:130px;top:564px;">Gasgrill</div>
<div class="t" style="left:345px;top:564px;">Endmontage</div>
<div class="t r" style="left:522px;top:564px;width:67px;">524,9700</div>
<div class="t r" style="left:592px;top:564px;width:67px;">524,9700</div>
<div class="t r" style="left:662px;top:564px;width:67px;">524,9700</div>
<div class="t r" style="left:732px;top:564px;width:63px;">0,0000</div>
<div class="t r" style="left:798px;top:564px;width:63px;">0</div>
<div class="t r" style="left:864px;top:564px;width:93px;">0,00</div>
<div class="t" style="left:963px;top:564px;">27.04.2017</div>
<div class="t" style="left:1028px;top:564px;">27.04.2017</div>
<div class="ind" style="left:15px;top:582px;width:10px;height:18px;"></div>
<div style="left:26px;top:599px;width:1064px;height:1px;background:#dfe6ee"></div>
<div style="left:25px;top:582px;width:1px;height:18px;background:#b4cce0"></div>
<div style="left:126px;top:582px;width:1px;height:17px;background:#dfe6ee"></div>
<div style="left:341px;top:582px;width:1px;height:17px;background:#dfe6ee"></div>
<div style="left:521px;top:582px;width:1px;height:17px;background:#dfe6ee"></div>
<div style="left:591px;top:582px;width:1px;height:17px;background:#dfe6ee"></div>
<div style="left:661px;top:582px;width:1px;height:17px;background:#dfe6ee"></div>
<div style="left:731px;top:582px;width:1px;height:17px;background:#dfe6ee"></div>
<div style="left:797px;top:582px;width:1px;height:17px;background:#dfe6ee"></div>
<div style="left:863px;top:582px;width:1px;height:17px;background:#dfe6ee"></div>
<div style="left:959px;top:582px;width:1px;height:17px;background:#dfe6ee"></div>
<div style="left:1024px;top:582px;width:1px;height:17px;background:#dfe6ee"></div>
<div style="left:1089px;top:582px;width:1px;height:17px;background:#dfe6ee"></div>
<div class="t" style="left:30px;top:582px;">FA-17000018</div>
<div class="t" style="left:130px;top:582px;">Gasgrill</div>
<div class="t" style="left:345px;top:582px;">Schweißverbindung</div>
<div class="t r" style="left:522px;top:582px;width:67px;">4,9980</div>
<div class="t r" style="left:592px;top:582px;width:67px;">4,9980</div>
<div class="t r" style="left:662px;top:582px;width:67px;">4,9980</div>
<div class="t r" style="left:732px;top:582px;width:63px;">0,0000</div>
<div class="t r" style="left:798px;top:582px;width:63px;">0</div>
<div class="t r" style="left:864px;top:582px;width:93px;">0,00</div>
<div class="t" style="left:963px;top:582px;">27.04.2017</div>
<div class="t" style="left:1028px;top:582px;">27.04.2017</div>
<div class="ind" style="left:15px;top:600px;width:10px;height:18px;"></div>
<div style="left:26px;top:617px;width:1064px;height:1px;background:#dfe6ee"></div>
<div style="left:25px;top:600px;width:1px;height:18px;background:#b4cce0"></div>
<div style="left:126px;top:600px;width:1px;height:17px;background:#dfe6ee"></div>
<div style="left:341px;top:600px;width:1px;height:17px;background:#dfe6ee"></div>
<div style="left:521px;top:600px;width:1px;height:17px;background:#dfe6ee"></div>
<div style="left:591px;top:600px;width:1px;height:17px;background:#dfe6ee"></div>
<div style="left:661px;top:600px;width:1px;height:17px;background:#dfe6ee"></div>
<div style="left:731px;top:600px;width:1px;height:17px;background:#dfe6ee"></div>
<div style="left:797px;top:600px;width:1px;height:17px;background:#dfe6ee"></div>
<div style="left:863px;top:600px;width:1px;height:17px;background:#dfe6ee"></div>
<div style="left:959px;top:600px;width:1px;height:17px;background:#dfe6ee"></div>
<div style="left:1024px;top:600px;width:1px;height:17px;background:#dfe6ee"></div>
<div style="left:1089px;top:600px;width:1px;height:17px;background:#dfe6ee"></div>
<div class="t" style="left:30px;top:600px;">FA-17000019</div>
<div class="t" style="left:130px;top:600px;">Gasgrill</div>
<div class="t" style="left:345px;top:600px;">Ablängen</div>
<div class="t r" style="left:522px;top:600px;width:67px;">4,9980</div>
<div class="t r" style="left:592px;top:600px;width:67px;">4,9980</div>
<div class="t r" style="left:662px;top:600px;width:67px;">4,9980</div>
<div class="t r" style="left:732px;top:600px;width:63px;">0,0000</div>
<div class="t r" style="left:798px;top:600px;width:63px;">0</div>
<div class="t r" style="left:864px;top:600px;width:93px;">0,00</div>
<div class="t" style="left:963px;top:600px;">27.04.2017</div>
<div class="t" style="left:1028px;top:600px;">27.04.2017</div>
</body></html>
